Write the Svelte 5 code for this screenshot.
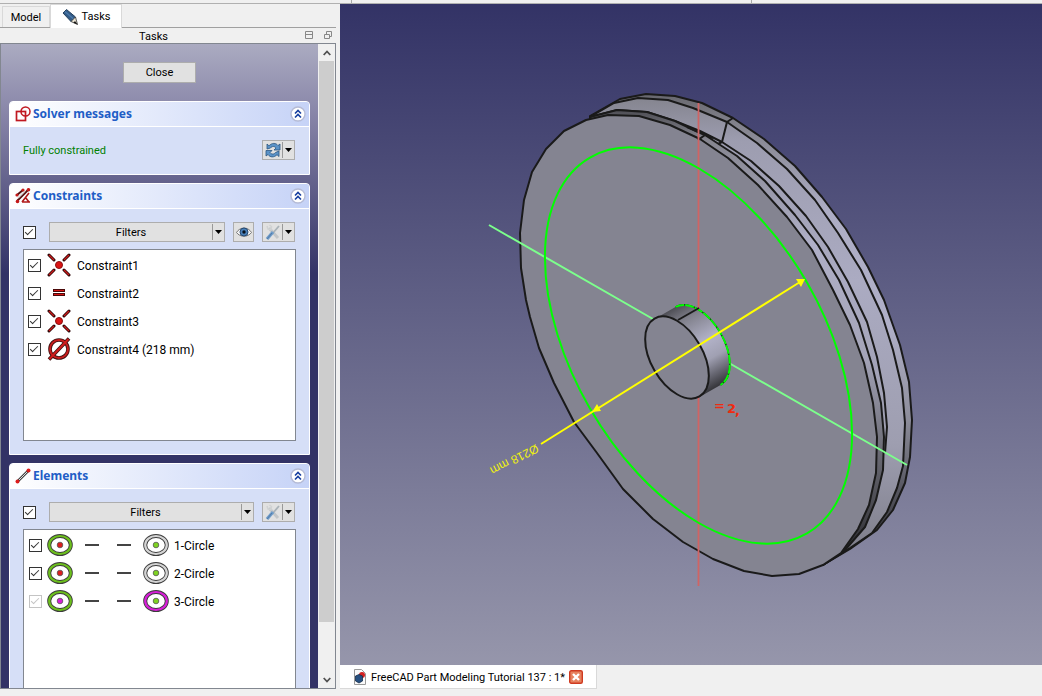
<script lang="ts">
	interface Constraint {
		name: string;
		kind: 'coincident' | 'equal' | 'diameter';
		checked: boolean;
	}

	interface SketchElement {
		name: string;
		point: string;
		ring: string;
		checked: boolean;
		disabled?: boolean;
	}

	let constraints = $state<Constraint[]>([
		{ name: 'Constraint1', kind: 'coincident', checked: true },
		{ name: 'Constraint2', kind: 'equal', checked: true },
		{ name: 'Constraint3', kind: 'coincident', checked: true },
		{ name: 'Constraint4 (218 mm)', kind: 'diameter', checked: true },
	]);

	let elements = $state<SketchElement[]>([
		{ name: '1-Circle', point: '#dc1e1e', ring: '#d4d4d4', checked: true },
		{ name: '2-Circle', point: '#dc1e1e', ring: '#d4d4d4', checked: true },
		{ name: '3-Circle', point: '#d81ed8', ring: '#d81ed8', checked: true, disabled: true },
	]);

	let open = $state({ solver: true, constraints: true, elements: true });
	let allConstraints = $state(true);
	let allElements = $state(true);

	// Outlines of the pulley, outermost flange first
	const OUTER = '590,116 620,99 646,94 675,96 702,103 733,118 764,139 795,166 822,197 846,229 868,267 884,300 900,345 909,382 912,420 910,457 905,483 893,510 877,530 850,549 823,565 590,118';
	const OUTER_INNER = '590,117 614,103 638,98 668,100 693,108 727,122 757,143 787,169 815,200 838,233 861,270 882,315 893,350 902,388 905,423 903,466 897,488 887,512 872,533 850,548 823,565';
	const GROOVE = '590,117 617,110 647,112 675,121 700,131 722,142 751,161 779,186 806,216 828,247 848,282 867,322 877,357 884,393 887,427 885,453';
	const FLANGE = '590,117 617,110 647,112 675,121 698,132 705,135 737,156 765,181 795,215 818,245 839,280 859,323 872,365 881,403 884,437 883,470 876,500 865,527 845,550 823,565';
	const FACE = '586,120 564,131 546,149 532,172 524,200 520,233 521,268 526,300 530,317 539,348 554,383 574,422 597,453 623,489 653,519 683,542 713,559 744,571 772,576 799,574 823,565 841,553 858,529 869,505 876,473 877,437 873,403 864,363 850,325 833,290 812,250 787,217 758,185 728,158 700,139 670,125 639,116 608,115';
</script>

{#snippet caret()}
	<svg class="caret" viewBox="0 0 7 4" width="7" height="4"><path d="M0 0h7L3.500 4z" fill="#000" /></svg>
{/snippet}

{#snippet toolIcon()}
	<svg viewBox="0 0 16 16" width="16" height="16">
		<path d="M4 4l9 10" stroke="#c3c6c8" stroke-width="3" fill="none" />
		<path d="M2 2l1 3 3 .5.500-3L4.500 1" stroke="#d0d2d3" stroke-width="1.500" fill="none" />
		<path d="M14 2L8 9" stroke="#a9b2b8" stroke-width="1.800" />
		<path d="M8 8l-6 7" stroke="#6f9cc9" stroke-width="3.200" />
		<path d="M7 9l-5 6" stroke="#4f79a8" stroke-width="1" />
	</svg>
{/snippet}

{#snippet constraintIcon(kind: string)}
	<svg class="kind" viewBox="0 0 24 24" width="24" height="24">
		{#if kind === 'coincident'}
			<path d="M2 2l5 5M22 2l-5 5M2 22l5-5M22 22l-5-5" stroke="#2a0505" stroke-width="3" stroke-linecap="round" />
			<path d="M2 2l5 5M22 2l-5 5M2 22l5-5M22 22l-5-5" stroke="#cc1c1c" stroke-width="1.400" />
			<circle cx="12" cy="12" r="3.500" fill="#dc1414" stroke="#8a1010" />
		{:else if kind === 'equal'}
			<rect x="6.500" y="8.500" width="11" height="2" fill="#d81414" stroke="#4a0909" />
			<rect x="6.500" y="12.500" width="11" height="2" fill="#d81414" stroke="#4a0909" />
		{:else}
			<circle cx="12" cy="12" r="9" fill="none" stroke="#3d1010" stroke-width="3.600" />
			<path d="M2 22.500L22 1.500" stroke="#3d1010" stroke-width="3.600" />
			<circle cx="12" cy="12" r="9" fill="none" stroke="#c81c1c" stroke-width="2" />
			<path d="M2.500 22L21.500 2" stroke="#d01c1c" stroke-width="2" />
		{/if}
	</svg>
{/snippet}

{#snippet circleIcon(ring: string, point: string)}
	<svg viewBox="0 0 26 22" width="26" height="22">
		<ellipse cx="13" cy="11" rx="10.800" ry="9" fill="#fff" stroke="#3c3c3c" stroke-width="4" />
		<ellipse cx="13" cy="11" rx="10.800" ry="9" fill="none" stroke={ring} stroke-width="2.200" />
		<circle cx="13" cy="11" r="2.800" fill={point} stroke="#555" stroke-width="0.800" />
	</svg>
{/snippet}

{#snippet groupHeader(title: string, key: 'solver' | 'constraints' | 'elements')}
	<header class="group-header">
		<svg viewBox="0 0 16 16" width="16" height="16">
			{#if key === 'solver'}
				<rect x="1.500" y="5.500" width="9" height="9" fill="none" stroke="#c01820" stroke-width="1.700" />
				<circle cx="10.500" cy="5.500" r="4.500" fill="none" stroke="#c01820" stroke-width="1.500" />
			{:else if key === 'constraints'}
				<path d="M2 7l6-5M2 13L14 1" stroke="#571010" stroke-width="2" />
				<path d="M3 10l7-7" stroke="#d8d8d8" stroke-width="1.500" />
				<path d="M7 14l7-9M7 14h8M10 9l4 5" fill="none" stroke="#b01818" stroke-width="1.600" />
				<circle cx="2" cy="7" r="1.600" fill="#c41818" />
				<circle cx="8" cy="2" r="1.600" fill="#c41818" />
				<circle cx="2.500" cy="13.500" r="1.800" fill="#c41818" />
				<circle cx="13.500" cy="1.800" r="1.800" fill="#c41818" />
			{:else}
				<path d="M2 14L14 2" stroke="#444" stroke-width="2.600" />
				<path d="M2 14L14 2" stroke="#ddd" />
				<circle cx="2.500" cy="13.500" r="2" fill="#dc1c1c" />
				<circle cx="13.500" cy="2.500" r="2" fill="#dc1c1c" />
			{/if}
		</svg>
		<h2>{title}</h2>
		<button class="fold" aria-label="Toggle {title}" aria-expanded={open[key]} onclick={() => (open[key] = !open[key])}>
			<svg viewBox="0 0 16 16" width="16" height="16">
				<circle cx="8" cy="8" r="7" fill="#fff" stroke="#b5bbd6" stroke-width="1.400" />
				<path d="M5 7.500l3-3 3 3M5 11.500l3-3 3 3" fill="none" stroke="#173fa0" stroke-width="1.600" />
			</svg>
		</button>
	</header>
{/snippet}

<div class="window">
	<div class="toolbar-edge"><i></i><i></i></div>
	<aside class="dock">
		<nav class="tabs">
			<button class="tab">Model</button>
			<button class="tab active">
				<svg viewBox="0 0 16 16" width="16" height="16">
					<path d="M1 4L4.500 .5 13.500 8 9 12.500z" fill="#335b86" stroke="#24415f" />
					<path d="M3 2.500L11.500 10" stroke="#4b7aab" stroke-width="1.500" />
					<path d="M13.500 8L9 12.500l6.500 3z" fill="#e9e3d2" stroke="#333" stroke-width="0.800" />
					<path d="M13 12l-1.500 1.800L15.500 15.500z" fill="#111" />
				</svg>
				Tasks
			</button>
		</nav>
		<div class="dock-title">
			<span>Tasks</span>
			<button aria-label="Shade"><svg viewBox="0 0 9 9" width="9" height="9"><path d="M.5.5h7v7h-7zM.5 3.500h7" fill="none" stroke="#888" /></svg></button>
			<button aria-label="Float"><svg viewBox="0 0 9 9" width="9" height="9"><path d="M.5 3.500h5v4h-5zM2.500 3.500v-3h5v5h-2" fill="none" stroke="#888" /></svg></button>
		</div>

		<div class="scroll-area">
			<div class="panel">
				<button class="close">Close</button>

				<section class="group">
					{@render groupHeader('Solver messages', 'solver')}
					{#if open.solver}
						<div class="group-body">
							<div class="row">
								<span class="status">Fully constrained</span>
								<button class="tool split" aria-label="Update">
									<span class="face">
										<svg viewBox="0 0 16 16" width="16" height="16">
											<path d="M2 7V2l2 1.800C7 .5 11 .8 13 3.500L15 2v6H9l2-2C9.500 4 7 4 5.500 6z" fill="#5b93c8" stroke="#2b5580" stroke-width="0.800" />
											<path d="M14 9v5.500l-2-1.800C9 15.800 5 15.500 3 12.500L1 14V8.500h6l-2 2c1.500 2 4 2 5.500 0z" fill="#5b93c8" stroke="#2b5580" stroke-width="0.800" />
										</svg>
									</span>
									{@render caret()}
								</button>
							</div>
						</div>
					{/if}
				</section>

				<section class="group">
					{@render groupHeader('Constraints', 'constraints')}
					{#if open.constraints}
						<div class="group-body">
							<div class="row">
								<input type="checkbox" aria-label="Filter constraints" bind:checked={allConstraints} />
								<button class="tool split filters"><span class="face label">Filters</span>{@render caret()}</button>
								<button class="tool eye" aria-label="Show constraints">
									<svg viewBox="0 0 16 12" width="16" height="12">
										<path d="M.5 6.500C4 .5 12 .5 15.500 6.500 12 11.500 4 11.500.5 6.500z" fill="#f3f3f3" stroke="#777" />
										<circle cx="8" cy="6" r="4" fill="#4a80b8" stroke="#264a73" />
										<circle cx="8" cy="6" r="1.700" fill="#07101c" />
									</svg>
								</button>
								<button class="tool split" aria-label="Constraint settings"><span class="face">{@render toolIcon()}</span>{@render caret()}</button>
							</div>
							<ul class="list">
								{#each constraints as c}
									<li>
										<label>
											<input type="checkbox" bind:checked={c.checked} />
											{@render constraintIcon(c.kind)}
											<span>{c.name}</span>
										</label>
									</li>
								{/each}
							</ul>
						</div>
					{/if}
				</section>

				<section class="group">
					{@render groupHeader('Elements', 'elements')}
					{#if open.elements}
						<div class="group-body">
							<div class="row">
								<input type="checkbox" aria-label="Filter elements" bind:checked={allElements} />
								<button class="tool split filters"><span class="face label">Filters</span>{@render caret()}</button>
								<button class="tool split" aria-label="Element settings"><span class="face">{@render toolIcon()}</span>{@render caret()}</button>
							</div>
							<ul class="list elements">
								{#each elements as el}
									<li>
										<label>
											<input type="checkbox" bind:checked={el.checked} disabled={el.disabled} />
											{@render circleIcon('#6cc01c', el.point)}
											<i class="dash"></i>
											<i class="dash"></i>
											{@render circleIcon(el.ring, '#7ed321')}
											<span>{el.name}</span>
										</label>
									</li>
								{/each}
							</ul>
						</div>
					{/if}
				</section>
			</div>

			<div class="scrollbar">
				<button aria-label="Scroll up"><svg viewBox="0 0 8 6" width="8" height="6"><path d="M.7 5L4 1.500 7.300 5" fill="none" stroke="#505050" stroke-width="1.800" /></svg></button>
				<div class="track"><div class="thumb"></div></div>
				<button aria-label="Scroll down"><svg viewBox="0 0 8 6" width="8" height="6"><path d="M.7 1L4 4.500 7.300 1" fill="none" stroke="#505050" stroke-width="1.800" /></svg></button>
			</div>
		</div>
	</aside>

	<main class="mdi">
		<svg class="view" viewBox="340 4 702 661" preserveAspectRatio="xMidYMid meet" role="img" aria-label="3D view">
			<defs>
				<linearGradient id="rim" gradientUnits="userSpaceOnUse" x1="0" y1="95" x2="0" y2="560">
					<stop offset="0" stop-color="#68686f" />
					<stop offset="0.07" stop-color="#85858f" />
					<stop offset="0.25" stop-color="#adadc4" />
					<stop offset="0.5" stop-color="#b0b0c8" />
					<stop offset="0.7" stop-color="#8c8c9a" />
					<stop offset="0.85" stop-color="#565660" />
					<stop offset="1" stop-color="#28282c" />
				</linearGradient>
				<linearGradient id="groove" gradientUnits="userSpaceOnUse" x1="0" y1="95" x2="0" y2="560">
					<stop offset="0" stop-color="#83838d" />
					<stop offset="0.1" stop-color="#9d9db0" />
					<stop offset="0.4" stop-color="#ababc2" />
					<stop offset="0.75" stop-color="#9e9eb0" />
					<stop offset="1" stop-color="#7c7c88" />
				</linearGradient>
				<linearGradient id="flange" gradientUnits="userSpaceOnUse" x1="0" y1="108" x2="0" y2="560">
					<stop offset="0" stop-color="#4a4a50" />
					<stop offset="0.07" stop-color="#85858f" />
					<stop offset="0.3" stop-color="#b0b0c8" />
					<stop offset="0.55" stop-color="#a4a4b8" />
					<stop offset="0.75" stop-color="#6e6e78" />
					<stop offset="1" stop-color="#28282c" />
				</linearGradient>
				<linearGradient id="hub" gradientUnits="userSpaceOnUse" x1="665" y1="312" x2="710" y2="390">
					<stop offset="0" stop-color="#4b4b52" />
					<stop offset="0.18" stop-color="#80808b" />
					<stop offset="0.5" stop-color="#b2b2c8" />
					<stop offset="0.7" stop-color="#a0a0b2" />
					<stop offset="1" stop-color="#38383d" />
				</linearGradient>
			</defs>

			<g class="edges">
				<polygon points={OUTER} fill="url(#rim)" />
				<polygon points={OUTER_INNER} fill="url(#groove)" />
				<polyline points={GROOVE} fill="none" />
				<polygon points={FLANGE} fill="url(#flange)" />
				<polygon points={FACE} fill="#848491" />
				<path d="M733 118L727 122 722 142 718 144M687 127L713 138M698 140L705 135" fill="none" />
			</g>

			<path d="M698.500 103V586" stroke="#d06464" stroke-width="1.800" />
			<path d="M489 225L653 319M729 363L907 465" stroke="#7cff8c" stroke-width="2" />
			<ellipse cx="698.500" cy="345.500" rx="217" ry="125.500" transform="rotate(60 698.500 345.500)" fill="none" stroke="#00ff00" stroke-width="2" />

			<path d="M654.500 319L675.500 307A45 26 60 0 1 720.500 385L699.500 397z" fill="url(#hub)" />
			<path d="M675.500 307A45 26 60 0 1 720.500 385" fill="none" stroke="#222" stroke-width="1.500" />
			<path d="M675.500 307A45 26 60 0 1 720.500 385" fill="none" stroke="#00ff00" stroke-width="2" stroke-dasharray="9 1" />
			<ellipse class="hub-face" cx="677" cy="357.500" rx="45" ry="26" transform="rotate(60 677 357.500)" />
			<path d="M678 320L699 308" stroke="#1a1a1a" stroke-width="2" />

			<path d="M541 444L800 282" stroke="#ffff00" stroke-width="2" />
			<path d="M805 279L801 287 796 279zM592 412L597 404 601 411z" fill="#ffff00" />
			<text class="dimension" transform="translate(536 444) rotate(153)">Ø218 mm</text>
			<text class="marker" x="714" y="410">=</text>
			<text class="marker" x="727" y="413">2<tspan x="735" y="415">,</tspan></text>
		</svg>

		<div class="doc-bar">
			<div class="doc-tab">
				<svg viewBox="0 0 14 16" width="14" height="16">
					<path d="M1.500.5h7l4 4v11h-11z" fill="#fafafa" stroke="#999" />
					<circle cx="9" cy="6" r="3" fill="#d42020" />
					<path d="M2.500 7l3.500-1.500L9.500 7v5L6 14l-3.500-2z" fill="#264f80" stroke="#142c49" stroke-width="0.800" />
				</svg>
				<span class="label">FreeCAD Part Modeling Tutorial 137 : 1*</span>
				<button aria-label="Close document">
					<svg viewBox="0 0 14 14" width="14" height="14">
						<rect x="0.700" y="0.700" width="12.600" height="12.600" rx="1.500" fill="#e6825f" stroke="#cf3a20" stroke-width="1.400" />
						<path d="M4 4l6 6M10 4l-6 6" stroke="#fff" stroke-width="2.400" />
					</svg>
				</button>
			</div>
		</div>
	</main>
</div>

<style>
	:global(body) {
		margin: 0;
		background: #f0f0f0;
	}
	.window {
		box-sizing: border-box;
		height: 100vh;
		display: grid;
		grid-template-columns: 336px 1fr;
		grid-template-rows: auto minmax(0, 1fr);
		column-gap: 4px;
		padding-bottom: 7px;
		background: #f0f0f0;
		color: #000;
		font-family: Roboto, 'Noto Sans', sans-serif;
		font-size: 11px;
		line-height: 16px;
	}
	button {
		font: inherit;
		color: inherit;
		padding: 0;
		border: none;
		background: none;
	}
	svg {
		display: block;
		flex: none;
	}
	.label {
		padding-top: 2px;
	}
	.toolbar-edge {
		grid-column: 1 / -1;
		display: flex;
		height: 3px;
		border-bottom: 1px solid #b0b0b0;
	}
	.toolbar-edge i {
		width: 351px;
		border-right: 1px solid #a8a8a8;
	}
	.toolbar-edge i + i {
		width: 399px;
	}
	.dock {
		display: flex;
		flex-direction: column;
		min-height: 0;
	}
	.tabs {
		display: flex;
		align-items: flex-end;
		height: 23px;
		padding-left: 2px;
		border-bottom: 1px solid #a0a0a0;
		flex: none;
	}
	.tab {
		height: 21px;
		width: 48px;
		padding-top: 2px;
		border: 1px solid #d9d9d9;
		border-bottom: none;
		background: #f0f0f0;
	}
	.tab.active {
		display: flex;
		align-items: center;
		justify-content: center;
		gap: 4px;
		width: 72px;
		height: 24px;
		margin-bottom: -1px;
		padding: 0;
		background: #fff;
	}
	.dock-title {
		display: flex;
		align-items: center;
		height: 15px;
		gap: 10px;
		padding: 0 3px 0 12px;
		flex: none;
	}
	.dock-title span {
		flex: 1;
		padding-top: 2px;
		text-align: center;
	}
	.scroll-area {
		flex: 1;
		min-height: 0;
		display: flex;
		border: 1px solid #828790;
	}
	.panel {
		flex: 1;
		min-width: 0;
		display: flex;
		flex-direction: column;
		gap: 8px;
		padding: 18px 8px 0;
		overflow: hidden;
		background: linear-gradient(#ababc1, #8885a8 70px, #333366 230px);
	}
	.close {
		align-self: center;
		flex: none;
		width: 73px;
		height: 21px;
		margin-bottom: 10px;
		padding-top: 1px;
		border: 1px solid #adadad;
		background: #e1e1e1;
	}
	.group {
		flex: none;
		border: 1px solid #fff;
		border-radius: 4px 4px 0 0;
		background: #d6dff7;
	}
	.group-header {
		display: flex;
		align-items: center;
		height: 24px;
		gap: 2px;
		padding: 0 3px 0 5px;
		border-bottom: 1px solid #fff;
		border-radius: 3px 3px 0 0;
		background: linear-gradient(90deg, #fff, #c6d3f7);
	}
	.group-header h2 {
		flex: 1;
		margin: 0;
		font-family: 'Noto Sans', sans-serif;
		font-size: 12px;
		font-weight: 700;
		color: #215dc6;
	}
	.group-body {
		padding: 13px;
	}
	.row {
		display: flex;
		align-items: center;
		height: 20px;
		padding: 0 1px 1px 0;
	}
	.status {
		flex: 1;
		padding-top: 2px;
		color: #008000;
	}
	.tool {
		box-sizing: border-box;
		display: flex;
		align-items: center;
		justify-content: center;
		height: 20px;
		border: 1px solid #adadad;
		background: #e1e1e1;
	}
	.split {
		width: 33px;
	}
	.face {
		display: flex;
		justify-content: center;
		flex: 1;
	}
	.tool :global(.caret) {
		box-sizing: content-box;
		padding: 6px 2px;
		border-left: 1px solid #999;
	}
	.filters {
		flex: 1;
		margin: 0 8px 0 13px;
	}
	.eye {
		width: 21px;
		margin-right: 8px;
	}
	input[type='checkbox'] {
		appearance: none;
		box-sizing: border-box;
		flex: none;
		width: 13px;
		height: 13px;
		margin: 0;
		border: 1px solid #333;
		background: #fff;
	}
	input[type='checkbox']:checked::after {
		content: '';
		display: block;
		width: 7px;
		height: 3px;
		margin: 2px 0 0 1px;
		border: solid #333;
		border-width: 0 0 1px 1px;
		transform: rotate(-45deg);
	}
	input[type='checkbox']:disabled,
	input[type='checkbox']:disabled::after {
		border-color: #c4c4c4;
	}
	.list {
		box-sizing: border-box;
		min-height: 192px;
		margin: 6px 0 0;
		padding: 1px 4px;
		border: 1px solid #828790;
		background: #fff;
		font-size: 12px;
		list-style: none;
	}
	.list label {
		display: flex;
		align-items: center;
		height: 28px;
	}
	.list span {
		padding-top: 1px;
	}
	.kind {
		margin: 0 6px;
	}
	.elements label {
		gap: 5px;
		padding-left: 1px;
	}
	.dash {
		width: 14px;
		height: 2px;
		margin: 0 7px;
		background: #444;
	}
	.dash + .dash {
		margin-left: 6px;
	}
	.scrollbar {
		display: flex;
		flex-direction: column;
		width: 17px;
		background: #f0f0f0;
	}
	.scrollbar button {
		display: grid;
		place-items: center;
		height: 17px;
	}
	.track {
		flex: 1;
	}
	.thumb {
		height: 92%;
		margin: 0 1px;
		background: #cdcdcd;
	}
	.mdi {
		display: flex;
		flex-direction: column;
		min-width: 0;
		min-height: 0;
	}
	.view {
		flex: 1;
		width: 100%;
		min-height: 0;
		background: linear-gradient(#333366, #9696ab);
	}
	.edges {
		stroke: #1a1a1a;
		stroke-width: 2;
		stroke-linejoin: round;
	}
	.hub-face {
		fill: #848491;
		stroke: #1a1a1a;
		stroke-width: 2;
	}
	.dimension {
		font: 12px 'Liberation Sans', sans-serif;
		fill: #f0f010;
	}
	.marker {
		font: bold 13px 'DejaVu Sans', sans-serif;
		fill: #f02a10;
	}
	.doc-bar {
		flex: none;
		display: flex;
		height: 24px;
	}
	.doc-tab {
		display: flex;
		align-items: center;
		gap: 4px;
		padding: 0 13px;
		border-right: 1px solid #d9d9d9;
		border-bottom: 1px solid #d9d9d9;
		background: #fff;
	}
</style>
